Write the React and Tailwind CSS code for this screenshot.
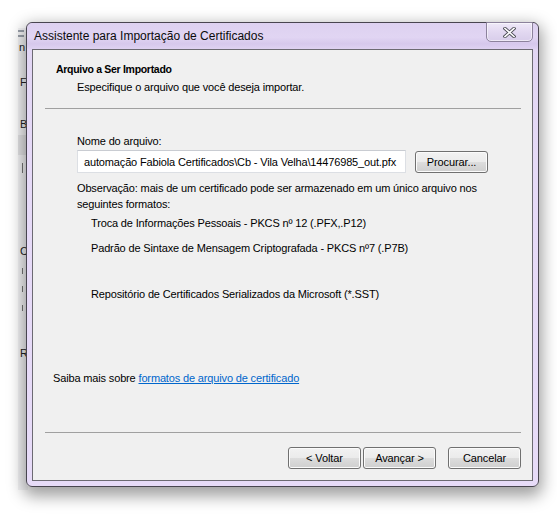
import React from "react";

const WinButton = ({ children, className = "" }) => (
  <button
    className={`flex items-center justify-center w-[73px] h-[22px] rounded-[3px] border border-[#707070] bg-[linear-gradient(to_bottom,#f2f2f2_0%,#ebebeb_50%,#dddddd_50%,#cfcfcf_100%)] shadow-[inset_0_0_0_1px_#fbfbfb] text-[11px] leading-none tracking-[-0.1px] text-black ${className}`}
  >
    {children}
  </button>
);

const CloseGlyph = () => (
  <svg width="13" height="11" viewBox="0 0 13 11">
    <path d="M2 1.5 L11 9.5 M11 1.5 L2 9.5" stroke="#4b4b55" strokeWidth="3.4" strokeLinecap="square" fill="none" />
    <path d="M2 1.5 L11 9.5 M11 1.5 L2 9.5" stroke="#ffffff" strokeWidth="1.6" strokeLinecap="square" fill="none" />
  </svg>
);

// bit of the window lying behind the dialog
const BehindStrip = () => (
  <div className="absolute left-[18px] top-[28px] w-[10px] h-[462px] bg-[#f4f4f6] overflow-hidden text-[11px] text-[#222] font-['Liberation_Sans',Arial,sans-serif]">
    <div className="absolute left-0 top-[2px] w-[6px] h-[2px] bg-[#9aa0aa]" />
    <div className="absolute left-0 top-[7px] w-[6px] h-[2px] bg-[#9aa0aa]" />
    <span className="absolute left-[1px] top-[11px]">n</span>
    <span className="absolute left-[2px] top-[46px]">Fa</span>
    <span className="absolute left-[2px] top-[88px]">Bi</span>
    <div className="absolute left-0 top-[107px] w-[10px] h-[20px] bg-[#e4e4e6]" />
    <div className="absolute left-[4px] top-[135px] w-px h-[10px] bg-[#777]" />
    <span className="absolute left-[2px] top-[215px]">C</span>
    <div className="absolute left-[4px] top-[240px] w-px h-[6px] bg-[#777]" />
    <div className="absolute left-[4px] top-[258px] w-px h-[6px] bg-[#777]" />
    <div className="absolute left-[4px] top-[277px] w-px h-[6px] bg-[#777]" />
    <span className="absolute left-[2px] top-[317px]">Re</span>
  </div>
);

export default function App() {
  return (
    <div className="relative w-[557px] h-[528px] overflow-hidden bg-white font-['Liberation_Sans',Arial,sans-serif] text-black">
      <BehindStrip />

      <div className="relative pl-[26px] pt-[22px]">
        {/* Window */}
        <div className="flex flex-col w-[513px] h-[465px] rounded-[6px] border border-[#48454f] bg-[linear-gradient(to_bottom,#dccfef_0%,#e2d6f4_6%,#e6daf7_30%,#e7dbf8_100%)] shadow-[0_6px_16px_3px_rgba(0,0,0,0.38)]">
          {/* Title bar */}
          <div className="flex items-start justify-between h-[26px] pl-[7px] pr-[5px] rounded-t-[6px] bg-[linear-gradient(to_bottom,#ddd1f0_0%,#e1d5f3_55%,#d6c8ec_80%,#dfd2f2_100%)]">
            <span className="mt-[5px] text-[12px] leading-[16px] text-[#0b0b0b]">
              Assistente para Importação de Certificados
            </span>
            <div className="-mt-px flex items-center justify-center w-[47px] h-[20px] rounded-b-[5px] border border-[#8c829c] bg-[linear-gradient(to_bottom,#efe9f8_0%,#e2d8f1_50%,#d8cdea_100%)] shadow-[inset_0_0_0_1px_rgba(255,255,255,0.55)]">
              <CloseGlyph />
            </div>
          </div>

          {/* Client area */}
          <div className="flex flex-col flex-1 mx-[5px] border border-[#6c6a72] bg-[#f0f0f0] text-[11px] leading-[16px] tracking-[-0.15px]">
            <div className="mt-[11px] ml-[23px] font-bold text-[10.5px] tracking-[-0.3px]">
              Arquivo a Ser Importado
            </div>
            <div className="mt-[2px] ml-[44px]">
              Especifique o arquivo que você deseja importar.
            </div>
            <div className="mt-[13px] ml-[12px] mr-[11px] h-px bg-[#a0a0a0]" />

            <div className="mt-[24px] ml-[44px]">Nome do arquivo:</div>
            <div className="flex items-start ml-[44px]">
              <div className="mt-[1px] flex items-center w-[329px] h-[23px] pl-[6px] bg-white border border-[#dcdfe4] border-t-[#c9ccd2] overflow-hidden whitespace-nowrap">
                automação Fabiola Certificados\Cb - Vila Velha\14476985_out.pfx
              </div>
              <WinButton className="mt-[2px] ml-[9px] h-[21px]">Procurar...</WinButton>
            </div>

            <div className="mt-[7px] ml-[44px] mr-[40px]">
              Observação: mais de um certificado pode ser armazenado em um único arquivo nos seguintes formatos:
            </div>
            <div className="mt-[3px] ml-[58px]">
              Troca de Informações Pessoais - PKCS nº 12 (.PFX,.P12)
            </div>
            <div className="mt-[9px] ml-[58px]">
              Padrão de Sintaxe de Mensagem Criptografada - PKCS nº7 (.P7B)
            </div>
            <div className="mt-[30px] ml-[58px]">
              Repositório de Certificados Serializados da Microsoft (*.SST)
            </div>

            <div className="mt-[68px] ml-[20px]">
              Saiba mais sobre{" "}
              <a href="#" className="text-[#0066cc] underline">
                formatos de arquivo de certificado
              </a>
            </div>

            <div className="mt-[46px] ml-[12px] mr-[11px] h-px bg-[#a0a0a0]" />

            <div className="mt-[14px] mr-[11px] flex justify-end">
              <WinButton>&lt; Voltar</WinButton>
              <WinButton className="ml-[2px]">Avançar &gt;</WinButton>
              <WinButton className="ml-[12px]">Cancelar</WinButton>
            </div>
          </div>
          <div className="h-[5px]" />
        </div>
      </div>
    </div>
  );
}
